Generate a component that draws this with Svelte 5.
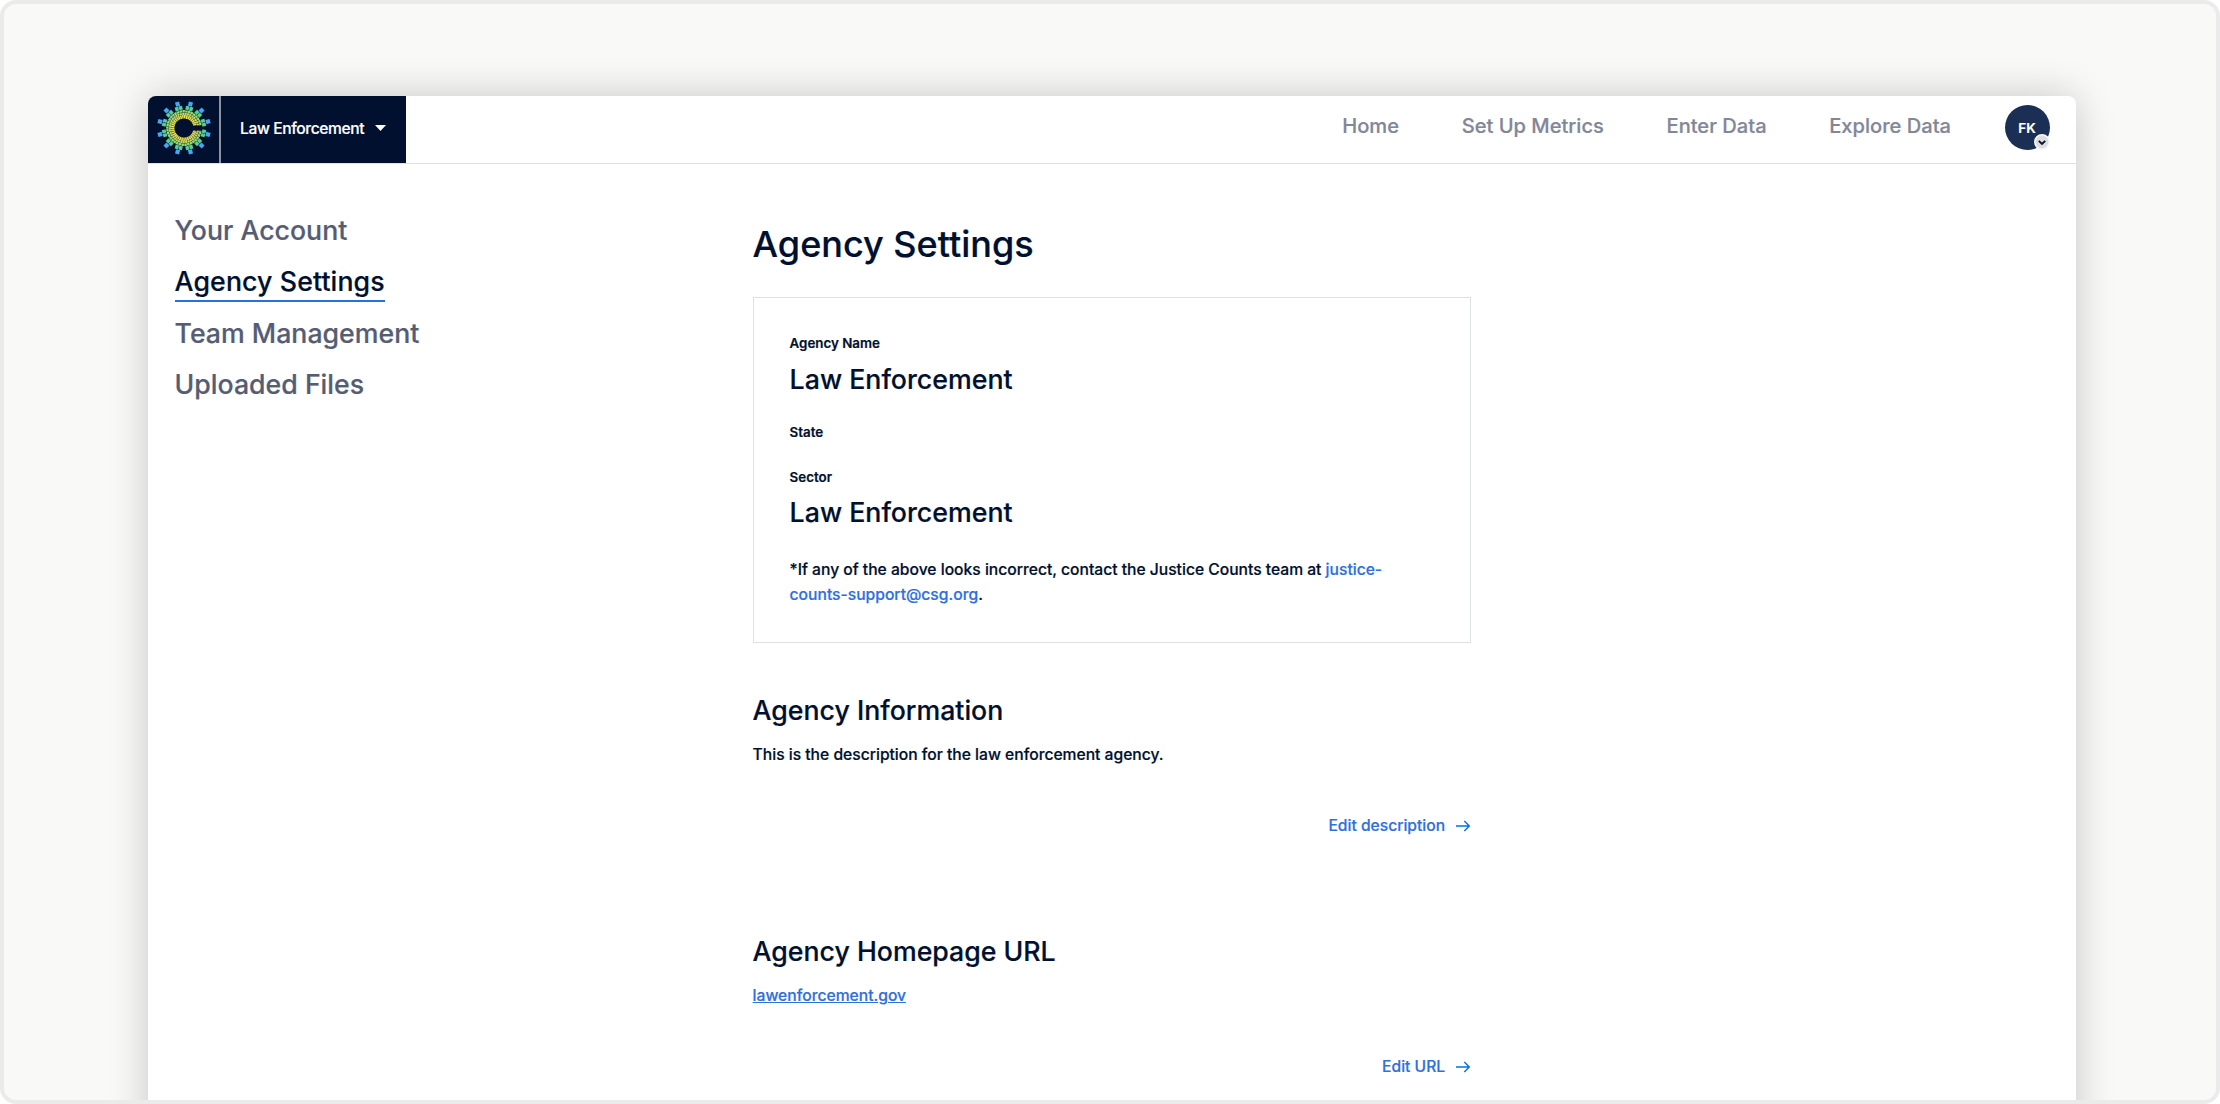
<script>
  const nav = ['Home', 'Set Up Metrics', 'Enter Data', 'Explore Data'];
  const menu = ['Your Account', 'Agency Settings', 'Team Management', 'Uploaded Files'];
  const active = 'Agency Settings';

  // Angles of the twelve rays around the radial logo, leaving the right side open.
  const rays = Array.from({ length: 12 }, (_, i) => 15 + i * 30);
</script>

<div class="stage">
  <div class="window">
    <header>
      <div class="logo">
        <svg width="56" height="56" viewBox="-28 -28 56 56">
          <g fill="none">
            <path d="M11 -2.6A11.3 11.3 0 1 0 11 2.6" stroke="#e8dc4e" stroke-width="3.6" stroke-dasharray="1.6 .3" />
            <path d="M14 -2.6A14.2 14.2 0 1 0 14 2.6" stroke="#b8dc5c" stroke-width="2.2" stroke-dasharray="2.1 .3" />
            <path d="M16.5 -2.8A16.7 16.7 0 1 0 16.5 2.8" stroke="#9ad869" stroke-width="2.4" stroke-dasharray="2.5 .3" />
          </g>
          {#each rays as angle}
            <g transform="rotate({angle})">
              <path d="M18.2 -3.7h3.9v3.5h-3.9zM18.2 .2h3.9v3.5h-3.9z" fill="#57cf93" />
              <path d="M22.6 -2.1h4.4v4.2h-4.4z" fill="#46a5f5" />
            </g>
          {/each}
        </svg>
      </div>
      <div class="agency">
        <span>Law Enforcement</span>
        <svg width="11" height="6" viewBox="0 0 11 6"><path d="M0 0h11l-5.5 6z" fill="#fff" /></svg>
      </div>
      <nav>
        {#each nav as item}<a href="#top">{item}</a>{/each}
      </nav>
      <div class="avatar">
        FK
        <svg class="badge" width="16" height="16" viewBox="0 0 16 16">
          <circle cx="8" cy="8" r="7.2" fill="#ddd" stroke="#f7f7f7" stroke-width="1.6" />
          <path d="M4.8 6.9 8 10l3.2-3.1" fill="none" stroke="#00102e" stroke-width="1.9" />
        </svg>
      </div>
    </header>

    <div class="body">
      <aside>
        {#each menu as item}
          <a href="#top" class:active={item === active}>{item}</a>
        {/each}
      </aside>

      <main>
        <h1>Agency Settings</h1>
        <section class="card">
          <div class="label">Agency Name</div>
          <div class="value">Law Enforcement</div>
          <div class="label state">State</div>
          <div class="label">Sector</div>
          <div class="value sector">Law Enforcement</div>
          <p>
            *If any of the above looks incorrect, contact the Justice Counts team at
            <span class="link">justice-<br />counts-support@csg.org</span>.
          </p>
        </section>

        <section class="block">
          <h2>Agency Information</h2>
          <p>This is the description for the law enforcement agency.</p>
          <div class="edit">
            Edit description
            <svg width="16" height="12" viewBox="0 0 16 12"><path d="M1 6h13M9.3 1l5 5-5 5" /></svg>
          </div>
        </section>

        <section class="block">
          <h2>Agency Homepage URL</h2>
          <p><span class="link url">lawenforcement.gov</span></p>
          <div class="edit">
            Edit URL
            <svg width="16" height="12" viewBox="0 0 16 12"><path d="M1 6h13M9.3 1l5 5-5 5" /></svg>
          </div>
        </section>
      </main>
    </div>
  </div>
</div>

<style>
  :global(body) {
    margin: 0;
    background: #fff;
    font-family: Inter, sans-serif;
    font-weight: 500;
    color: #00102e;
  }
  .stage {
    box-sizing: border-box;
    height: 1104px;
    padding: 92px 140px 0 144px;
    border: 4px solid #ebebeb;
    border-radius: 16px;
    background: #f9f9f7;
    overflow: hidden;
    -webkit-text-stroke: 0.2px currentColor;
  }
  .window {
    height: 1100px;
    border-radius: 8px 8px 0 0;
    background: #fff;
    box-shadow: 0 0 40px rgba(0, 0, 0, 0.2);
    overflow: hidden;
  }
  header {
    box-sizing: border-box;
    display: flex;
    align-items: center;
    height: 68px;
    border-bottom: 1px solid #dfe0e1;
    padding-right: 26.5px;
  }
  .logo,
  .agency {
    box-sizing: border-box;
    display: flex;
    align-items: center;
    height: 67px;
    background: #00102e;
  }
  .logo {
    width: 71px;
    padding: 0 0 4px 7.5px;
  }
  .agency {
    width: 187px;
    padding: 0 0 3px 19px;
    border-left: 2px solid #8b93a3;
    gap: 11px;
    color: #fff;
    font-size: 15.6px;
    letter-spacing: -0.025em;
  }
  nav {
    display: flex;
    gap: 62.7px;
    margin-left: auto;
    margin-right: 53.5px;
  }
  nav a {
    color: #828798;
    font-size: 20.1px;
    line-height: 26px;
    padding-bottom: 7px;
    text-decoration: none;
  }
  .avatar {
    position: relative;
    display: flex;
    align-items: center;
    justify-content: center;
    width: 45px;
    height: 45px;
    margin-top: -4px;
    border-radius: 50%;
    background: #1b2f55;
    color: #fff;
    font-size: 13.4px;
    font-weight: 600;
  }
  .badge {
    position: absolute;
    right: 0;
    bottom: 0;
  }
  .body {
    display: flex;
  }
  aside {
    box-sizing: border-box;
    display: flex;
    flex: none;
    flex-direction: column;
    align-items: flex-start;
    gap: 13.4px;
    width: 604.6px;
    padding: 49px 0 0 26.6px;
  }
  aside a {
    box-sizing: border-box;
    height: 38px;
    border-bottom: 2px solid transparent;
    color: #545d74;
    font-size: 26.7px;
    line-height: 35px;
    text-decoration: none;
  }
  aside a.active {
    color: #00102e;
    border-color: #2a6fe0;
    letter-spacing: 0.12px;
  }
  main {
    width: 718px;
    padding-top: 57px;
  }
  h1,
  h2,
  p {
    margin: 0;
    font-weight: 500;
  }
  h1 {
    font-size: 36px;
    line-height: 46px;
  }
  .card {
    box-sizing: border-box;
    height: 346px;
    margin-top: 30px;
    padding: 36px;
    border: 1px solid #dfe0e1;
  }
  .label {
    font-size: 13.35px;
    font-weight: 600;
    line-height: 18px;
  }
  .value {
    margin: 10px 0 26px;
    font-size: 26.75px;
    line-height: 35px;
  }
  .state {
    margin-bottom: 27px;
  }
  .sector {
    margin: 9px 0 28px;
  }
  p {
    font-size: 15.65px;
    line-height: 24.5px;
  }
  .link {
    color: #2f6fde;
  }
  .url {
    text-decoration: underline;
  }
  .block {
    box-sizing: border-box;
    height: 241px;
    padding-top: 50px;
  }
  h2 {
    font-size: 26.7px;
    line-height: 35px;
  }
  .block p {
    margin-top: 15px;
  }
  .edit {
    display: flex;
    align-items: center;
    justify-content: flex-end;
    gap: 9.5px;
    margin-top: 46px;
    color: #2f6fde;
    font-size: 15.64px;
    line-height: 24px;
  }
  .edit path {
    fill: none;
    stroke: #0073e5;
    stroke-width: 1.4;
  }
</style>
